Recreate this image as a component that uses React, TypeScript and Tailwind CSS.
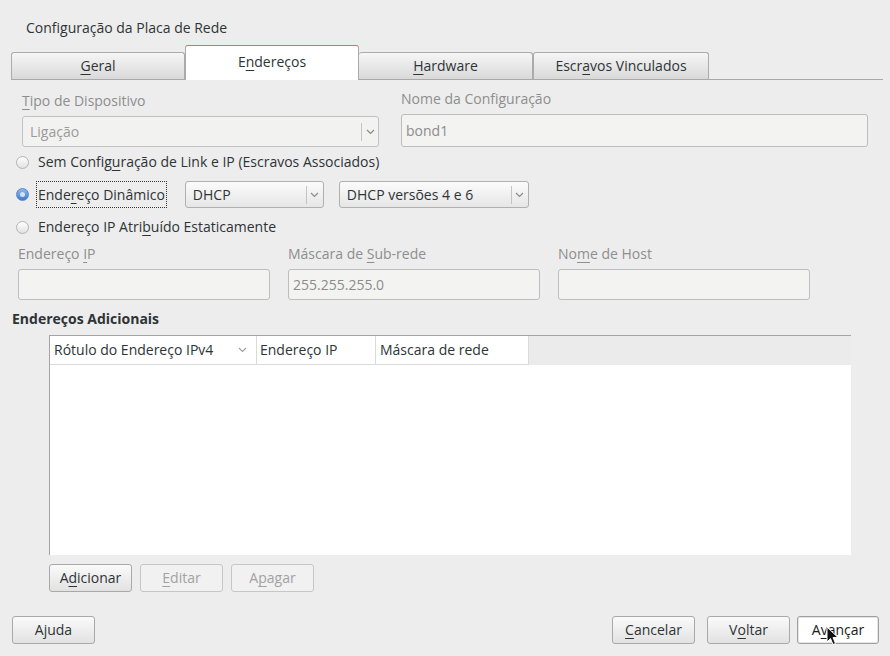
import React from "react";

const font = "font-['Open_Sans',sans-serif]";

function U({ children }: { children: React.ReactNode }) {
  return <span className="underline underline-offset-[3px] decoration-1">{children}</span>;
}

function Chevron({ color = "#8a8a8a" }: { color?: string }) {
  return (
    <svg width="9" height="6" viewBox="0 0 9 6">
      <path d="M1 1 L4.5 4.5 L8 1" fill="none" stroke={color} strokeWidth="1.2" />
    </svg>
  );
}

function Combo({
  text,
  width,
  height,
  disabled,
}: {
  text: string;
  width: string;
  height: string;
  disabled?: boolean;
}) {
  return (
    <div
      className={`${width} ${height} flex items-center rounded-[3px] border ${
        disabled
          ? "border-[#c2c2c2] bg-[#f2f2f1] text-[#9a9a9a]"
          : "border-[#b0b0b0] bg-gradient-to-b from-[#fbfbfb] to-[#e6e6e6] text-[#2e3436]"
      }`}
    >
      <span className="flex-1 pl-[7px] pt-px">{text}</span>
      <div className="flex h-[18px] w-[17px] items-center justify-center border-l border-[#c4c4c4]">
        <Chevron />
      </div>
    </div>
  );
}

function Radio({ checked }: { checked?: boolean }) {
  if (checked) {
    return (
      <div className="flex h-[13px] w-[13px] items-center justify-center rounded-full border border-[#5a87c4] bg-gradient-to-b from-[#8fb8ee] to-[#3d7ad1]">
        <div className="h-[5px] w-[5px] rounded-full bg-[#cfe2fb]" />
      </div>
    );
  }
  return <div className="h-[13px] w-[13px] rounded-full border border-[#b4b4b4] bg-gradient-to-b from-white to-[#e2e2e2]" />;
}

function Input({ value, width }: { value?: string; width: string }) {
  return (
    <div className={`${width} h-[31px] flex items-center rounded-[3px] border border-[#bdbdbd] bg-[#f3f3f2] pl-[4px] text-[#8c8c8c]`}>
      {value}
    </div>
  );
}

function Btn({
  children,
  width = "w-[83px]",
  disabled,
  focused,
}: {
  children: React.ReactNode;
  width?: string;
  disabled?: boolean;
  focused?: boolean;
}) {
  let cls = "border-[#a9a9a9] bg-gradient-to-b from-[#fafafa] to-[#e2e2e2] text-[#2e3436]";
  if (disabled) cls = "border-[#c6c6c6] bg-[#f1f1f1] text-[#a2a2a2]";
  if (focused) cls = "border-[#a0a0a0] bg-white text-[#1a1a1a] ring-1 ring-inset ring-[#e4e4e4]";
  return (
    <div className={`${width} h-[28px] flex items-center justify-center rounded-[3px] border ${cls}`}>
      <span>{children}</span>
    </div>
  );
}

export default function App() {
  const tabBase = "w-[174px] flex items-center justify-center text-[#2e3436]";
  return (
    <div className={`relative w-[890px] h-[656px] overflow-hidden bg-[#ededed] text-[14px] leading-[18px] text-[#2e3436] ${font}`}>
      {/* title */}
      <div className="h-[46px] pl-[26px] pt-[19px]">Configuração da Placa de Rede</div>

      {/* tabs */}
      <div className="ml-[11px] mr-[7px] flex h-[34px] items-end border-b border-[#a9a9a9]">
        <div className={`${tabBase} h-[27px] rounded-t-[3px] border border-b-0 border-[#ababab] bg-gradient-to-b from-[#f6f6f6] to-[#d9d9d9] pb-px`}>
          <span><U>G</U>eral</span>
        </div>
        <div className={`${tabBase} -mb-px h-[35px] rounded-t-[3px] border border-b-0 border-[#a9a9a9] border-t-[#5d93d8] bg-white pb-[2px]`}>
          <span>E<U>n</U>dereços</span>
        </div>
        <div className={`${tabBase} h-[27px] rounded-t-[3px] border border-b-0 border-l-0 border-[#ababab] bg-gradient-to-b from-[#f6f6f6] to-[#d9d9d9] pb-px`}>
          <span><U>H</U>ardware</span>
        </div>
        <div className={`${tabBase} w-[176px] h-[27px] rounded-t-[3px] border border-b-0 border-[#ababab] bg-gradient-to-b from-[#f6f6f6] to-[#d9d9d9] pb-px`}>
          <span>Escr<U>a</U>vos Vinculados</span>
        </div>
      </div>

      {/* device type / config name */}
      <div className="flex pl-[22px]">
        <div className="flex w-[357px] flex-col">
          <div className="mt-[12px] text-[#8e8e8e]"><U>T</U>ipo de Dispositivo</div>
          <div className="mt-[6px]">
            <Combo text="Ligação" width="w-[357px]" height="h-[31px]" disabled />
          </div>
        </div>
        <div className="ml-[22px] flex w-[467px] flex-col">
          <div className="mt-[10px] text-[#8e8e8e]">Nome da Configuração</div>
          <div className="mt-[6px] h-[33px] flex items-center rounded-[3px] border border-[#bdbdbd] bg-[#f3f3f2] pl-[4px] text-[#8c8c8c]">
            bond1
          </div>
        </div>
      </div>

      {/* radios */}
      <div className="mt-[6px] flex h-[18px] items-center pl-[16px]">
        <Radio />
        <span className="ml-[9px]">Sem Config<U>u</U>ração de Link e IP (Escravos Associados)</span>
      </div>
      <div className="mt-[10px] flex h-[27px] items-center pl-[16px]">
        <Radio checked />
        <span className="ml-[7px] flex h-[27px] items-center border border-dotted border-[#333] px-px">
          Ende<U>r</U>eço Dinâmico
        </span>
        <div className="ml-[18px]">
          <Combo text="DHCP" width="w-[139px]" height="h-[27px]" />
        </div>
        <div className="ml-[15px]">
          <Combo text="DHCP versões 4 e 6" width="w-[190px]" height="h-[27px]" />
        </div>
      </div>
      <div className="mt-[10px] flex h-[18px] items-center pl-[16px]">
        <Radio />
        <span className="ml-[9px]">Endereço IP Atri<U>b</U>uído Estaticamente</span>
      </div>

      {/* static ip fields */}
      <div className="mt-[9px] flex gap-[18px] pl-[18px]">
        <div className="flex flex-col">
          <div className="text-[#8e8e8e]">Endereço <U>I</U>P</div>
          <div className="mt-[6px]"><Input width="w-[252px]" /></div>
        </div>
        <div className="flex flex-col">
          <div className="text-[#8e8e8e]">Máscara de <U>S</U>ub-rede</div>
          <div className="mt-[6px]"><Input width="w-[252px]" value="255.255.255.0" /></div>
        </div>
        <div className="flex flex-col">
          <div className="text-[#8e8e8e]">No<U>m</U>e de Host</div>
          <div className="mt-[6px]"><Input width="w-[252px]" /></div>
        </div>
      </div>

      {/* additional addresses */}
      <div className="mt-[10px] pl-[12px] font-bold text-[#2e3436]">Endereços Adicionais</div>
      <div className="ml-[49px] mt-[7px] flex h-[220px] w-[802px] flex-col border-l border-t border-[#a4a4a4] bg-white">
        <div className="flex h-[29px]">
          <div className="flex w-[207px] items-center justify-between border-b border-r border-[#dadada] pl-[4px] pr-[9px]">
            <span>Rótulo do Endereço IPv4</span>
            <Chevron color="#a0a0a0" />
          </div>
          <div className="flex w-[119px] items-center border-b border-r border-[#dadada] pl-[3px]">Endereço IP</div>
          <div className="flex w-[153px] items-center border-b border-r border-[#dadada] pl-[4px]">Máscara de rede</div>
          <div className="flex-1 bg-[#ebebeb]" />
        </div>
        <div className="flex-1" />
      </div>

      <div className="ml-[49px] mt-[9px] flex gap-[8px]">
        <Btn>A<U>d</U>icionar</Btn>
        <Btn disabled><U>E</U>ditar</Btn>
        <Btn disabled>A<U>p</U>agar</Btn>
      </div>

      {/* footer */}
      <div className="mt-[24px] flex pl-[12px] pr-[11px]">
        <Btn>Ajuda</Btn>
        <div className="flex-1" />
        <div className="flex">
          <Btn><U>C</U>ancelar</Btn>
          <div className="ml-[12px]"><Btn>V<U>o</U>ltar</Btn></div>
          <div className="ml-[7px]"><Btn width="w-[82px]" focused>A<U>v</U>ançar</Btn></div>
        </div>
      </div>

      {/* mouse pointer */}
      <svg className="absolute left-[826px] top-[626px]" width="13" height="20" viewBox="0 0 13 20">
        <path d="M1 1 L1 16 L4.5 12.5 L7 18.5 L9.5 17.5 L7 11.5 L12 11.5 Z" fill="#111" stroke="#fff" strokeWidth="1" />
      </svg>
    </div>
  );
}
